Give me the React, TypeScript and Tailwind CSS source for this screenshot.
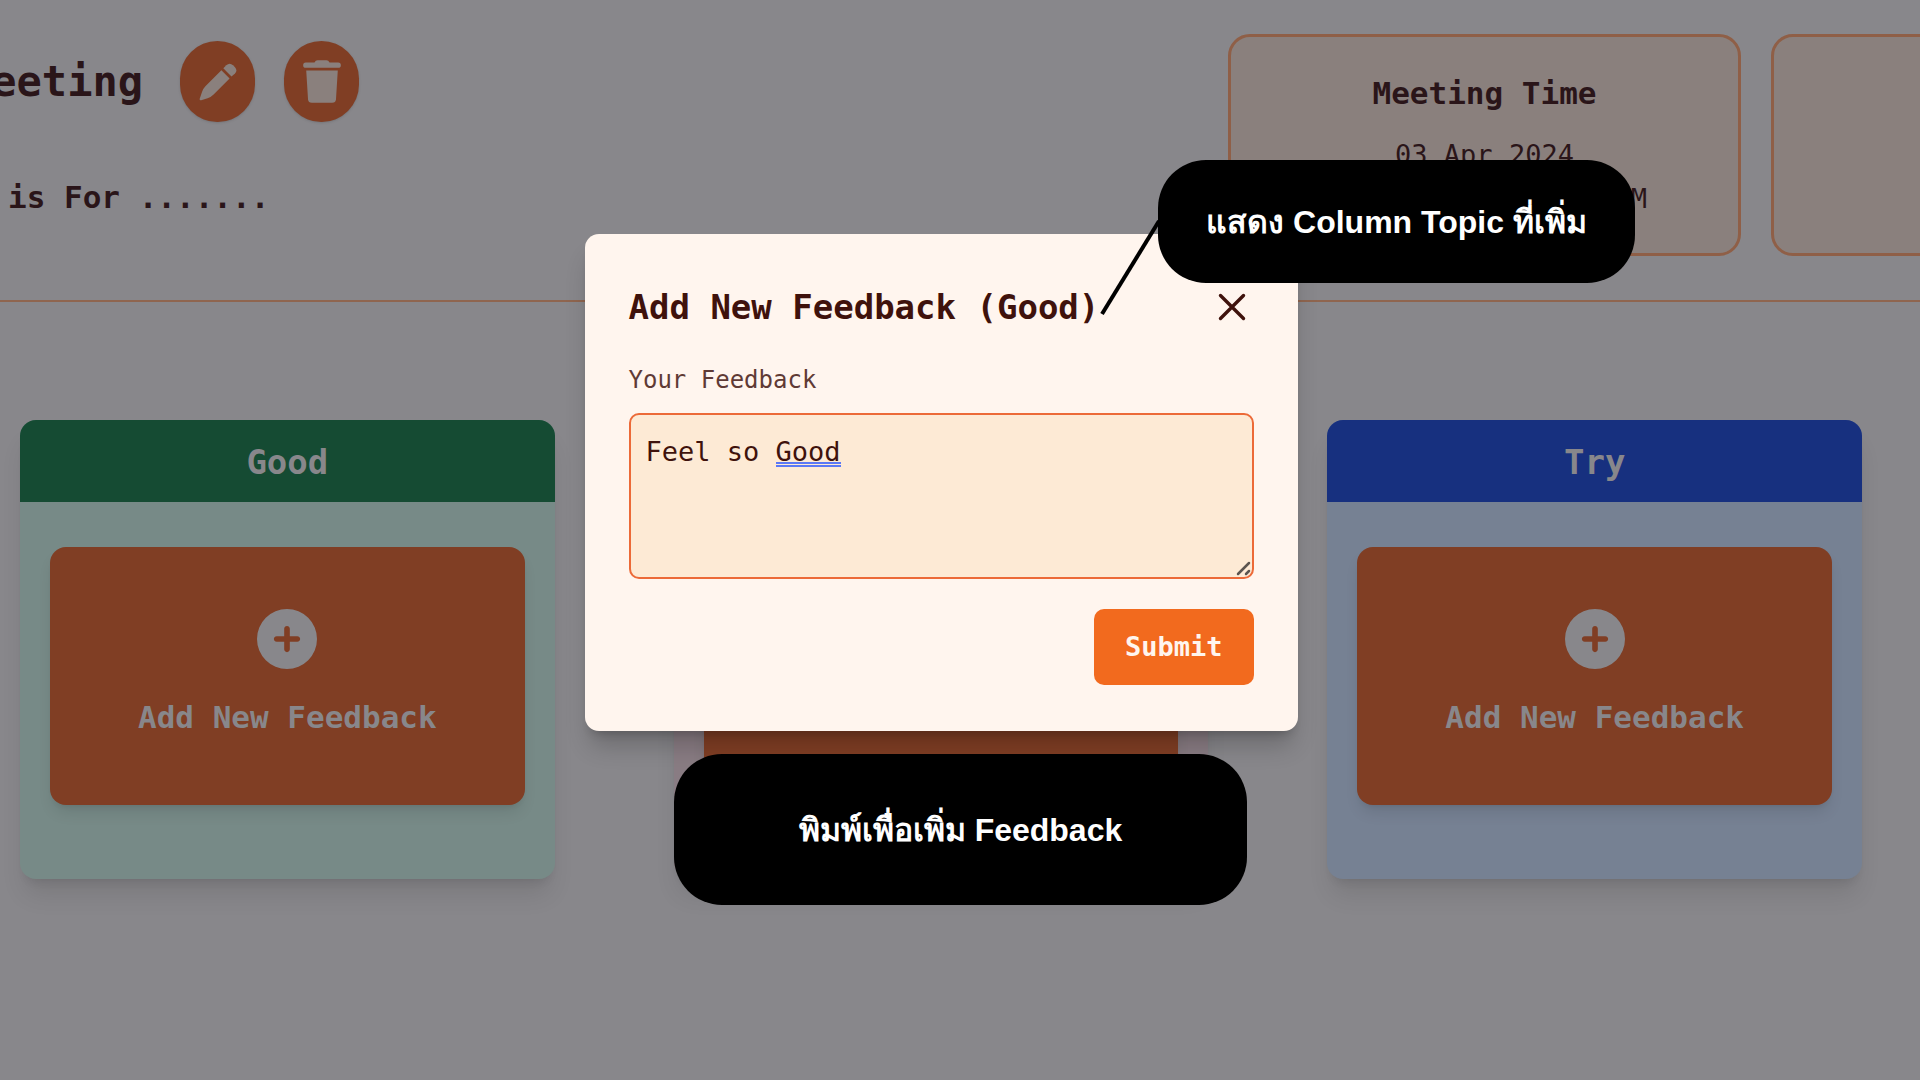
import { FaCirclePlus } from "react-icons/fa6";

type Column = { title: string; head: string; body: string };

const columns: Column[] = [
  { title: "Good", head: "bg-[#154b33]", body: "bg-[#778a87]" },
  { title: "Bad", head: "bg-[#7a1f22]", body: "bg-[#897c83]" },
  { title: "Try", head: "bg-[#17307f]", body: "bg-[#768193]" },
];

function PencilIcon() {
  return (
    <svg className="size-[38px]" viewBox="0 0 38 38" fill="currentColor">
      <path d="M22.4 7.2 30.6 15.4 14.6 31.4Q12 34 8.6 35.2L2.2 37.2Q.3 37.6.7 35.7L3 29Q4 25.600 6.400 23.200Z" />
      <path d="M24.300 5.300 27.300 2.300Q30.700-.7 34 2.300L36 4.300Q38.800 7.600 36 10.500L32.500 13.500Z" />
    </svg>
  );
}

function TrashIcon() {
  return (
    <svg className="h-[43px] w-[38px]" viewBox="0 0 38 43" fill="currentColor">
      <path d="M11.500 2.500Q12.500.2 14.500.2H23.500Q25.500.2 26.500 2.500H35.200A2.650 2.650 0 0 1 35.200 7.800H2.800A2.650 2.650 0 0 1 2.800 2.500Z" />
      <path d="M3.200 10.500H34.800L33 39.300Q32.700 42.800 29.200 42.800H8.800Q5.300 42.800 5 39.300Z" />
    </svg>
  );
}

function FeedbackColumn({ title, head, body }: Column) {
  return (
    <section className={`overflow-hidden rounded-2xl shadow-xl shadow-black/10 ${body}`}>
      <h2 className={`pt-[22px] pb-5 text-center text-[34px] leading-10 font-bold text-[#88878b] ${head}`}>{title}</h2>
      <div className="px-[30px] pt-[45px] pb-[74px]">
        <button className="flex w-full flex-col items-center gap-7 rounded-2xl bg-[#803e24] pt-[62px] pb-[68px] text-[31px] leading-10 font-bold text-[#88878b] shadow-lg shadow-black/10">
          <FaCirclePlus className="size-[60px]" />
          Add New Feedback
        </button>
      </div>
    </section>
  );
}

function FeedbackDialog() {
  return (
    <div className="absolute inset-x-0 top-[234px] flex justify-center pr-[38px]">
      <div role="dialog" aria-labelledby="dialog-title" className="w-[713px] rounded-[14px] bg-[#fff5ee] px-[44px] pt-[49px] pb-[46px] text-[#3f120c] shadow-xl shadow-black/20">
        <div className="flex items-center justify-between">
          <h2 id="dialog-title" className="text-[34px] leading-12 font-bold">Add New Feedback (Good)</h2>
          <button aria-label="Close" className="p-2">
            <svg className="size-7" viewBox="0 0 28 28" stroke="currentColor" strokeWidth="3.400" strokeLinecap="round">
              <path d="M2.500 2.500 25.500 25.500M25.500 2.500 2.500 25.500" />
            </svg>
          </button>
        </div>
        <label htmlFor="feedback" className="mt-[33px] block text-[24px] leading-8 text-[#5f3a35]">Your Feedback</label>
        <div className="relative mt-[17px]">
          <textarea
            id="feedback"
            spellCheck={false}
            defaultValue="Feel so Good"
            className="block h-[166px] w-full resize-none rounded-[10px] border-2 border-[#ec6a38] bg-[#fdead5] px-[15px] py-[17px] text-[27px] leading-10 outline-none"
          />
          <span className="absolute top-[49px] left-[147px] h-[5px] w-[65px] border-y-2 border-[#5b78f5]" />
          <svg className="absolute right-[2px] bottom-[2px] size-4 text-[#5c5550]" viewBox="0 0 16 16" fill="none" stroke="currentColor" strokeWidth="2.500" strokeLinecap="round">
            <path d="M2 13 13 2M10 13l3-3" />
          </svg>
        </div>
        <div className="mt-[30px] flex justify-end">
          <button className="rounded-[10px] bg-[#f26a1e] px-[31px] py-[18px] text-[27px] leading-10 font-bold text-[#fff5ee]">Submit</button>
        </div>
      </div>
    </div>
  );
}

export default function App() {
  return (
    <div className="relative min-h-screen overflow-hidden bg-[#88878b] font-['DejaVu_Sans_Mono',monospace] text-[#2a1519]">
      <header className="flex items-start justify-between border-b-2 border-[#8f654f] pb-11">
        <div className="pt-[41px]">
          <div className="-ml-[34px] flex items-center gap-[29px]">
            <h1 className="mr-2 text-[42px] leading-14 font-bold">Meeting</h1>
            <button aria-label="Edit meeting" className="flex h-[81px] w-[75px] items-center justify-center rounded-full bg-[#803e24] text-[#8a807d] shadow">
              <PencilIcon />
            </button>
            <button aria-label="Delete meeting" className="flex h-[81px] w-[75px] items-center justify-center rounded-full bg-[#803e24] text-[#8a807d] shadow">
              <TrashIcon />
            </button>
          </div>
          <p className="mt-[55px] ml-2 text-[31px] leading-10 font-bold">is For .......</p>
        </div>
        <div className="-mr-[364px] flex shrink-0 gap-[30px] pt-[34px]">
          <div className="h-[222px] w-[513px] rounded-[22px] border-3 border-[#8f5f47] bg-[#8a807d] pt-[36px] text-center">
            <h2 className="text-[31px] leading-10 font-bold">Meeting Time</h2>
            <p className="mt-[22px] text-[27px] leading-10">03 Apr 2024</p>
            <p className="mt-1 text-[27px] leading-10">10:00 AM to 11:00 PM</p>
          </div>
          <div className="h-[222px] w-[513px] rounded-[22px] border-3 border-[#8f5f47] bg-[#8a807d]" />
        </div>
      </header>

      <main className="grid grid-cols-3 gap-[119px] pt-[118px] pr-[58px] pl-5">
        {columns.map((c) => (
          <FeedbackColumn key={c.title} {...c} />
        ))}
      </main>

      <FeedbackDialog />

      <svg className="absolute top-[216px] left-[1096px] h-[104px] w-[70px]" viewBox="0 0 70 104">
        <path d="M6 98 63 5" stroke="#000" strokeWidth="4" />
      </svg>
      <div className="absolute top-[160px] left-[1158px] flex h-[123px] w-[477px] items-center justify-center rounded-[48px] bg-black font-['Liberation_Sans',sans-serif] text-[32px] font-bold text-white">
        แสดง Column Topic ที่เพิ่ม
      </div>
      <div className="absolute top-[754px] left-[674px] flex h-[151px] w-[573px] items-center justify-center rounded-[48px] bg-black font-['Liberation_Sans',sans-serif] text-[32px] font-bold text-white">
        พิมพ์เพื่อเพิ่ม Feedback
      </div>
    </div>
  );
}
